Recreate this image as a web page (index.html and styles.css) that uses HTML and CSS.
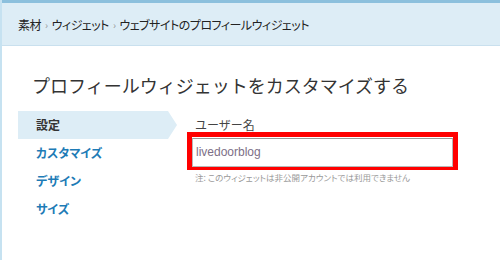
FILE: index.html
```html
<!DOCTYPE html>
<html lang="ja">
<head>
    <meta charset="UTF-8">
    <title>プロフィールウィジェット</title>
    <link rel="stylesheet" href="styles.css">
</head>
<body>

    <div class="breadcrumb">
        <span>素材</span><span class="sep">›</span><span>ウィジェット</span><span class="sep">›</span><span>ウェブサイトのプロフィールウィジェット</span>
    </div>

    <h1 class="page-title">プロフィールウィジェットをカスタマイズする</h1>

    <div class="content">
        <ul class="side-menu">
            <li class="menu-item active">設定</li>
            <li class="menu-item">カスタマイズ</li>
            <li class="menu-item">デザイン</li>
            <li class="menu-item">サイズ</li>
        </ul>

        <div class="panel">
            <div class="field-label">ユーザー名</div>
            <div class="highlight">
                <input class="text-input" type="text" value="livedoorblog">
            </div>
            <div class="note">注: このウィジェットは非公開アカウントでは利用できません</div>
        </div>
    </div>

</body>
</html>
```

FILE: styles.css
```css
html, body {
    margin: 0;
    padding: 0;
    height: 100%;
}

body {
    background: #fff;
    border-left: 2px solid #c6e2f1;
    box-sizing: border-box;
    font-family: "Noto Sans CJK JP", "Noto Sans", sans-serif;
    color: #333;
}

.breadcrumb {
    height: 42px;
    border-top: 3px solid #8cc0dd;
    border-bottom: 1px solid #c9e0ee;
    background: #ddedf6;
    padding-left: 16px;
    display: flex;
    align-items: center;
    font-size: 12px;
    letter-spacing: -0.5px;
    font-feature-settings: "palt";
    color: #222;
}

.breadcrumb .sep {
    color: #999;
    font-size: 10px;
    margin: 0 4px;
}

.page-title {
    margin: 27px 0 14px 30px;
    font-size: 18px;
    line-height: 24px;
    font-weight: normal;
    color: #333;
}

.content {
    display: flex;
    gap: 10px;
    padding-left: 16px;
}

.side-menu {
    list-style: none;
    margin: 0;
    padding: 0;
    width: 159px;
}

.menu-item {
    height: 28px;
    line-height: 28px;
    padding-left: 18px;
    font-size: 12px;
    font-weight: bold;
    font-feature-settings: "palt";
    color: #1d7bb6;
}

.menu-item.active {
    background: #ddedf6;
    color: #333;
    clip-path: polygon(0 0, calc(100% - 9px) 0, 100% 50%, calc(100% - 9px) 100%, 0 100%);
}

.panel {
    padding-top: 6px;
}

.field-label {
    padding-left: 8px;
    font-size: 12px;
    line-height: 15px;
    color: #444;
}

.highlight {
    border: 5px solid #f00;
    border-bottom-width: 4px;
    width: 261px;
    height: 29px;
}

.text-input {
    box-sizing: border-box;
    width: 261px;
    height: 29px;
    margin: 0;
    border: 1px solid #b8b8b8;
    border-top-color: #999;
    padding: 0 3px;
    font-family: "Liberation Sans", Arial, sans-serif;
    font-size: 12px;
    color: #7d6f87;
    outline: none;
}

.note {
    padding-left: 8px;
    font-size: 8.5px;
    line-height: 14px;
    font-feature-settings: "palt";
    color: #999;
}
```
